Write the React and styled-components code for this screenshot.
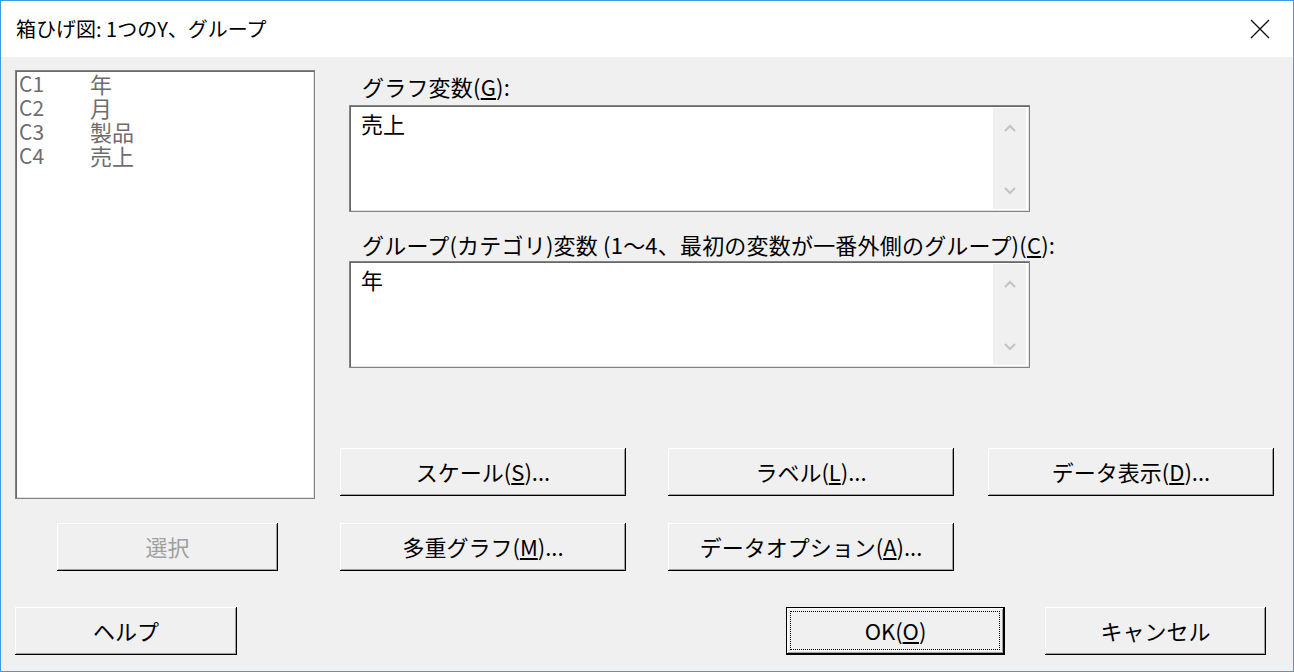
import React from 'react';
import styled, { createGlobalStyle } from 'styled-components';

const columns = [
  { id: 'C1', name: '年' },
  { id: 'C2', name: '月' },
  { id: 'C3', name: '製品' },
  { id: 'C4', name: '売上' },
];

function Mnemonic({ text, keyChar, tail = '' }) {
  return (
    <>
      {text}(<U>{keyChar}</U>){tail}
    </>
  );
}

function TextField({ value, $mt }) {
  return (
    <TextBox $mt={$mt}>
      <TextValue>{value}</TextValue>
      <ScrollStrip>
        <svg width="12" height="8" viewBox="0 0 12 8">
          <polyline points="1,7 6,2 11,7" fill="none" stroke="#c4c4c4" strokeWidth="2.2" />
        </svg>
        <svg width="12" height="8" viewBox="0 0 12 8">
          <polyline points="1,1 6,6 11,1" fill="none" stroke="#c4c4c4" strokeWidth="2.2" />
        </svg>
      </ScrollStrip>
    </TextBox>
  );
}

export default function App() {
  return (
    <>
      <GlobalStyle />
      <Window>
        <TitleBar>
          <Title>箱ひげ図: 1つのY、グループ</Title>
          <CloseButton aria-label="close">
            <svg width="20" height="20" viewBox="0 0 20 20">
              <path d="M1 1 L19 19 M19 1 L1 19" stroke="#111" strokeWidth="1.4" fill="none" />
            </svg>
          </CloseButton>
        </TitleBar>

        <Body>
          <TopRow>
            <ListBox>
              {columns.map((c) => (
                <ListItem key={c.id}>
                  <ColId>{c.id}</ColId>
                  <span>{c.name}</span>
                </ListItem>
              ))}
            </ListBox>

            <RightPane>
              <Fields>
                <FieldLabel $mt={6}>
                  <Mnemonic text="グラフ変数" keyChar="G" tail=":" />
                </FieldLabel>
                <TextField value="売上" $mt={5} />
                <FieldLabel $mt={22}>
                  <Mnemonic
                    text="グループ(カテゴリ)変数 (1～4、最初の変数が一番外側のグループ)"
                    keyChar="C"
                    tail=":"
                  />
                </FieldLabel>
                <TextField value="年" $mt={3} />
              </Fields>

              <ButtonRow $bottom>
                <Button $w={286}>
                  <Mnemonic text="スケール" keyChar="S" tail="..." />
                </Button>
                <Button $w={286} $ml={42}>
                  <Mnemonic text="ラベル" keyChar="L" tail="..." />
                </Button>
                <Button $w={286} $ml={34}>
                  <Mnemonic text="データ表示" keyChar="D" tail="..." />
                </Button>
              </ButtonRow>
            </RightPane>
          </TopRow>

          <MidRow>
            <LeftCell>
              <Button $w={221} disabled>
                選択
              </Button>
            </LeftCell>
            <ButtonRow>
              <Button $w={286}>
                <Mnemonic text="多重グラフ" keyChar="M" tail="..." />
              </Button>
              <Button $w={286} $ml={42}>
                <Mnemonic text="データオプション" keyChar="A" tail="..." />
              </Button>
            </ButtonRow>
          </MidRow>

          <BottomRow>
            <Button $w={222}>ヘルプ</Button>
            <Button $w={219} $ml={549} $default>
              <Mnemonic text="OK" keyChar="O" />
            </Button>
            <Button $w={221} $ml={40}>
              キャンセル
            </Button>
          </BottomRow>
        </Body>
      </Window>
    </>
  );
}

/******************** styled components ************************/

const GlobalStyle = createGlobalStyle`
  html, body {
    margin: 0;
    padding: 0;
    background: #f0f0f0;
  }
  body {
    font-family: "Noto Sans CJK JP", "Noto Sans", sans-serif;
  }
  * {
    box-sizing: border-box;
  }
`;

const Window = styled.div`
  width: 1294px;
  height: 672px;
  border: 1px solid #3d9be9;
  background: #f0f0f0;
  display: flex;
  flex-direction: column;
  overflow: hidden;
`;

const TitleBar = styled.div`
  height: 56px;
  flex: none;
  background: #ffffff;
  display: flex;
  align-items: center;
  justify-content: space-between;
  padding-left: 15px;
`;

const Title = styled.span`
  font-size: 20px;
  line-height: 1;
  color: #000;
`;

const CloseButton = styled.div`
  width: 66px;
  height: 56px;
  display: flex;
  align-items: center;
  justify-content: center;
`;

const Body = styled.div`
  display: flex;
  flex-direction: column;
  padding: 13px 0 0 14px;
`;

const TopRow = styled.div`
  display: flex;
  height: 429px;
`;

const ListBox = styled.div`
  width: 300px;
  height: 429px;
  background: #fff;
  border: 1px solid #828282;
  box-shadow: inset 1px 1px #696969, inset -1px -1px #e3e3e3;
  padding: 1px 3px;
`;

const ListItem = styled.div`
  display: flex;
  height: 24px;
  line-height: 22px;
  font-size: 22px;
  color: #6d6d6d;
`;

const ColId = styled.span`
  width: 71px;
  font-size: 21px;
`;

const RightPane = styled.div`
  width: 933px;
  margin-left: 25px;
  display: flex;
  flex-direction: column;
`;

const Fields = styled.div`
  padding-left: 9px;
  display: flex;
  flex-direction: column;
`;

const FieldLabel = styled.div`
  margin-top: ${(p) => p.$mt || 0}px;
  padding-left: 13px;
  height: 24px;
  line-height: 20px;
  font-size: 22px;
  letter-spacing: 0.2px;
  color: #000;
  white-space: nowrap;
`;

const TextBox = styled.div`
  margin-top: ${(p) => p.$mt || 0}px;
  width: 681px;
  height: 107px;
  display: flex;
  background: #fff;
  border: 1px solid #828282;
  box-shadow: inset 1px 1px #696969, inset -1px -1px #e3e3e3;
  padding: 2px;
`;

const TextValue = styled.div`
  flex: 1;
  padding: 4px 0 0 9px;
  font-size: 22px;
  line-height: 22px;
  color: #000;
`;

const ScrollStrip = styled.div`
  width: 33px;
  margin-right: 1px;
  background: #f0f0f0;
  display: flex;
  flex-direction: column;
  align-items: center;
  justify-content: space-between;
  padding: 16px 0 14px;
`;

const ButtonRow = styled.div`
  display: flex;
  margin-top: ${(p) => (p.$bottom ? 'auto' : '0')};
  margin-bottom: ${(p) => (p.$bottom ? '3px' : '0')};
`;

const MidRow = styled.div`
  display: flex;
  margin-top: 24px;
`;

const LeftCell = styled.div`
  width: 325px;
  padding-left: 42px;
`;

const BottomRow = styled.div`
  display: flex;
  margin-top: 36px;
`;

const Button = styled.button`
  position: relative;
  width: ${(p) => p.$w}px;
  height: 48px;
  margin: 0 0 0 ${(p) => p.$ml || 0}px;
  padding: 0 0 3px;
  flex: none;
  background: #f0f0f0;
  border: ${(p) => (p.$default ? '1px solid #000' : 'none')};
  box-shadow: inset -1px -1px #000, inset 1px 1px #fff, inset -2px -2px #a0a0a0;
  font-family: "Noto Sans CJK JP", "Noto Sans", sans-serif;
  font-size: 22px;
  line-height: 24px;
  color: ${(p) => (p.disabled ? '#a0a0a0' : '#000')};
  display: flex;
  align-items: center;
  justify-content: center;

  &::after {
    content: '';
    display: ${(p) => (p.$default ? 'block' : 'none')};
    position: absolute;
    inset: 3px 4px 4px 3px;
    border: 1px dotted #000;
  }
`;

const U = styled.span`
  text-decoration: underline;
  text-underline-offset: 2px;
`;
